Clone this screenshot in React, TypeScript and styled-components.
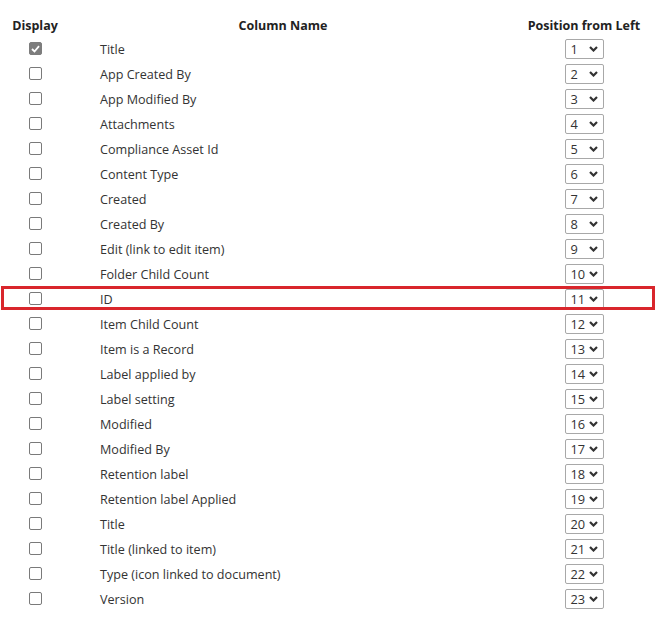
import React from "react";
import styled, { createGlobalStyle } from "styled-components";

const Global = createGlobalStyle`
  html, body { margin: 0; padding: 0; background: #fff; }
  body { font-family: "Open Sans", "Noto Sans", sans-serif; color: #333; }
`;

const columns = [
  "Title",
  "App Created By",
  "App Modified By",
  "Attachments",
  "Compliance Asset Id",
  "Content Type",
  "Created",
  "Created By",
  "Edit (link to edit item)",
  "Folder Child Count",
  "ID",
  "Item Child Count",
  "Item is a Record",
  "Label applied by",
  "Label setting",
  "Modified",
  "Modified By",
  "Retention label",
  "Retention label Applied",
  "Title",
  "Title (linked to item)",
  "Type (icon linked to document)",
  "Version",
];

const Table = styled.div`
  width: 656px;
  padding-top: 12px;
  display: flex;
  flex-direction: column;
`;

const Row = styled.div<{ $highlight?: boolean }>`
  position: relative;
  display: grid;
  grid-template-columns: 70px 442px 144px;
  height: 25px;
  box-sizing: border-box;
  align-items: center;
  ${(p) =>
    p.$highlight &&
    `
    &::after {
      content: "";
      position: absolute;
      left: 1px;
      right: 1px;
      top: 0px;
      bottom: 1px;
      border: 3px solid #d9262c;
      pointer-events: none;
    }
  `}
`;

const HeaderRow = styled(Row)`
  height: 24px;
  padding-top: 3px;
`;

const HeadCell = styled.div<{ $shift?: number }>`
  font-weight: 700;
  font-size: 12.5px;
  color: #222;
  text-align: center;
  padding-right: ${(p) => p.$shift ?? 0}px;
  white-space: nowrap;
`;

const CheckCell = styled.div`
  display: flex;
  justify-content: center;
`;

const Box = styled.span<{ $checked?: boolean }>`
  width: 13px;
  height: 13px;
  box-sizing: border-box;
  border-radius: 2px;
  border: 1px solid ${(p) => (p.$checked ? "#7d7d7d" : "#7a7a7a")};
  background: ${(p) => (p.$checked ? "#7d7d7d" : "#fff")};
  display: flex;
  align-items: center;
  justify-content: center;
`;

const NameCell = styled.div`
  padding-left: 30px;
  padding-top: 2px;
  font-size: 12.6px;
  color: #333;
  white-space: nowrap;
`;

const PosCell = styled.div`
  display: flex;
  justify-content: center;
`;

const Select = styled.div`
  width: 39px;
  height: 20px;
  box-sizing: border-box;
  border: 1px solid #a8a8a8;
  border-radius: 2px;
  background: #fff;
  display: flex;
  align-items: center;
  padding-left: 5px;
  padding-right: 5px;
  padding-top: 1px;
  font-size: 12.8px;
  color: #333;
`;

const Num = styled.span`
  flex: 1;
`;

const Chevron = () => (
  <svg width="9" height="6" viewBox="0 0 9 6">
    <polyline points="1,1 4.5,4.5 8,1" fill="none" stroke="#333" strokeWidth="2.2" />
  </svg>
);

const Check = () => (
  <svg width="9" height="8" viewBox="0 0 9 8">
    <polyline points="1,4 3.5,6.5 8,1.2" fill="none" stroke="#fff" strokeWidth="1.8" />
  </svg>
);

export default function App() {
  return (
    <>
      <Global />
      <Table>
        <HeaderRow>
          <HeadCell>Display</HeadCell>
          <HeadCell $shift={16}>Column Name</HeadCell>
          <HeadCell>Position from Left</HeadCell>
        </HeaderRow>
        {columns.map((name, i) => (
          <Row key={i} $highlight={name === "ID"}>
            <CheckCell>
              <Box $checked={i === 0}>{i === 0 && <Check />}</Box>
            </CheckCell>
            <NameCell>{name}</NameCell>
            <PosCell>
              <Select>
                <Num>{i + 1}</Num>
                <Chevron />
              </Select>
            </PosCell>
          </Row>
        ))}
      </Table>
    </>
  );
}
